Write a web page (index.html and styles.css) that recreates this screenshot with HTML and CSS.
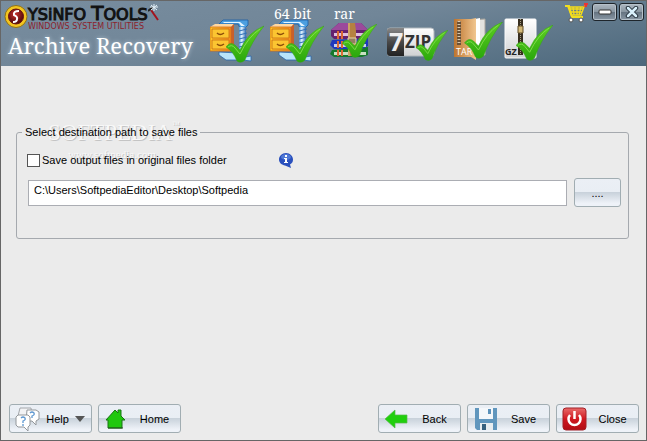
FILE: index.html
```html
<!DOCTYPE html>
<html lang="en">
<head>
  <meta charset="UTF-8">
  <meta name="viewport" content="width=device-width, initial-scale=1.0">
  <title>Archive Recovery</title>
  <link rel="stylesheet" href="styles.css">
</head>
<body>

<svg class="defs" width="0" height="0" aria-hidden="true">
  <defs>
    <linearGradient id="green" x1="0" y1="0" x2="0" y2="1">
      <stop offset="0" stop-color="#5fcf22"/><stop offset="1" stop-color="#2aa80c"/>
    </linearGradient>
    <linearGradient id="gold" x1="0" y1="0" x2="1" y2="0">
      <stop offset="0" stop-color="#ffc928"/><stop offset="1" stop-color="#f58a1c"/>
    </linearGradient>
    <linearGradient id="steel" x1="0" y1="0" x2="1" y2="0">
      <stop offset="0" stop-color="#4d9be0"/><stop offset=".4" stop-color="#e8f6ff"/><stop offset="1" stop-color="#2c68b0"/>
    </linearGradient>
    <linearGradient id="paper" x1="0" y1="0" x2="0" y2="1">
      <stop offset="0" stop-color="#ffffff"/><stop offset="1" stop-color="#cfd1d3"/>
    </linearGradient>
    <linearGradient id="dark" x1="0" y1="0" x2="0" y2="1">
      <stop offset="0" stop-color="#888"/><stop offset=".5" stop-color="#484848"/><stop offset="1" stop-color="#222"/>
    </linearGradient>
    <linearGradient id="folder" x1="0" y1="0" x2="1" y2="0">
      <stop offset="0" stop-color="#bd752f"/><stop offset="1" stop-color="#f1c68f"/>
    </linearGradient>
    <linearGradient id="redbox" x1="0" y1="0" x2="0" y2="1">
      <stop offset="0" stop-color="#e86a6a"/><stop offset=".5" stop-color="#d01820"/><stop offset="1" stop-color="#b00c14"/>
    </linearGradient>
    <radialGradient id="ball" cx=".45" cy=".35" r=".65">
      <stop offset="0" stop-color="#c8322e"/><stop offset="1" stop-color="#4a0808"/>
    </radialGradient>
    <symbol id="tick" viewBox="0 0 38 38">
      <path d="M0 21Q4 15 9 19L14 24Q22 6 38 0Q25 16 19 34Q15 38 11 35Q7 25 0 21Z" fill="url(#green)" stroke="#35a514" stroke-width=".5"/>
      <path d="M2 21Q6 18 9 22L14 28Q22 11 34 3" fill="none" stroke="#7fdc4c" stroke-width="1"/>
    </symbol>
    <symbol id="cabinet" viewBox="0 0 54 46">
      <path d="M9 5L13 1H38V6L35 9H30L28 5Z" fill="#4c9fe0" stroke="#1c5da4" stroke-width=".8"/>
      <path d="M14 3H30L35 7H31L29 4H13Z" fill="#e4f5ff"/>
      <path d="M9 33V36L16 41H32L41 42V37L35 38 28 34Z" fill="#b9e4fb" stroke="#2a66ac" stroke-width=".8"/>
      <path d="M29 8H36V38H29Z" fill="url(#steel)"/>
      <path d="M29 12L37 10M29 16L37 14M29 20L37 18M29 24L37 22M29 28L37 26M29 32L37 30M29 36L37 34" stroke="#2f70b8" stroke-width="1"/>
      <path d="M0 8L5 5H24L21 8Z" fill="#ffd7a0"/>
      <path d="M21 8L24 5V29L21 32Z" fill="#c9602a"/>
      <path d="M0 8H21V32H0Z" fill="url(#gold)" stroke="#cf6d1a" stroke-width=".8"/>
      <path d="M2 10H19V19H2ZM2 21H19V30H2Z" fill="#fbc531" stroke="#c76c16" stroke-width=".8"/>
      <path d="M7 14Q10 17 14 14M7 25Q10 28 14 25" fill="none" stroke="#8c4d0a" stroke-width="1.5"/>
      <use href="#tick" x="16" y="6" width="38" height="40"/>
    </symbol>
  </defs>
</svg>

<div class="window">
  <header class="titlebar">
    <div class="brand">
      <div class="logo">
        <svg class="logo-ball" width="24" height="25" viewBox="0 0 24 25">
          <circle cx="12" cy="12.500" r="11" fill="#f4c520" stroke="#8d7218" stroke-width="1"/>
          <circle cx="12" cy="12.500" r="7.500" fill="url(#ball)" stroke="#611" stroke-width="1"/>
          <path d="M15 7Q9 7 10 11Q14 13 13 15Q13 18 9 18" fill="none" stroke="#fff" stroke-width="2"/>
        </svg>
        <div class="logo-text">
          <div class="logo-name">YSiNFO <span class="logo-big">T</span>OOLS</div>
          <div class="logo-tag">WINDOWS SYSTEM UTILITIES</div>
        </div>
        <svg class="hammer" width="12" height="18" viewBox="0 0 12 18">
          <path d="M3 6L10 16" stroke="#a3121c" stroke-width="2"/>
          <path d="M0 7L5 3" stroke="#222" stroke-width="2"/>
          <path d="M6 0V7M2 3H10M3 1L9 6M9 1L3 6" stroke="#e4f0f8" stroke-width="1"/>
        </svg>
      </div>
      <h1>Archive Recovery</h1>
    </div>

    <div class="formats">
      <div class="format">
        <svg width="54" height="46"><use href="#cabinet"/></svg>
      </div>
      <div class="format">
        <span class="caption">64 bit</span>
        <svg width="54" height="46"><use href="#cabinet"/></svg>
      </div>
      <div class="format">
        <span class="caption">rar</span>
        <svg width="47" height="46" viewBox="0 0 47 46">
          <path d="M2 31L38 28V36L32 38H4L0 35Z" fill="#15792b"/>
          <path d="M4 33H36V36H4Z" fill="#c9dfc2"/>
          <path d="M2 21L38 19V27L32 30H4L0 26Z" fill="#2038bd"/>
          <path d="M4 25H36V28H4Z" fill="#c8d1ec"/>
          <path d="M1 11L9 4H31L38 11V18L32 20H4L1 17Z" fill="#65206f"/>
          <path d="M1 11L9 4H31L38 11Z" fill="#9b4a9c"/>
          <path d="M4 14H36V17H4Z" fill="#dfbfdf"/>
          <path d="M8 12V20M8 22V29M8 31V37M12 12V20M12 22V29M12 31V37" stroke="#dc6a34" stroke-width="2"/>
          <path d="M18 4H25L26 12V37H18Z" fill="#b58141"/>
          <path d="M19 4V37" stroke="#e6c28b"/>
          <path d="M18 19H26V25H18Z" fill="#947f60" stroke="#e9d5a9"/>
          <use href="#tick" x="12" y="5" width="35" height="35"/>
        </svg>
      </div>
      <div class="format seven">
        <svg width="61" height="46" viewBox="0 0 61 46">
          <rect x="0" y="9" width="47" height="28" rx="3" fill="url(#paper)" stroke="#aeb6bb"/>
          <path d="M3 9H17V37H3Q0 37 0 34V12Q0 9 3 9Z" fill="url(#dark)"/>
          <text class="seven-digit" x="2" y="32">7</text>
          <text class="seven-zip" x="18" y="29">ZIP</text>
          <use href="#tick" x="29" y="11" width="32" height="32"/>
        </svg>
      </div>
      <div class="format tar">
        <svg width="50" height="46" viewBox="0 0 50 46">
          <path d="M17 2L32 1V37L17 38Z" fill="#e3e2df" stroke="#aaa69e"/>
          <path d="M22 1L27 0V37L22 38Z" fill="#fff"/>
          <path d="M1 1H18L23 0V42L18 39H1Z" fill="url(#folder)"/>
          <path d="M6 3V27" stroke="#6b5136" stroke-width="4"/>
          <path d="M6 3V27" stroke="#dac9af" stroke-width="3" stroke-dasharray="1 2"/>
          <text class="tar-text" x="3" y="37">TAR</text>
          <use href="#tick" x="11" y="4" width="39" height="38"/>
        </svg>
      </div>
      <div class="format gz">
        <svg width="49" height="46" viewBox="0 0 49 46">
          <rect x="1" y="1" width="31" height="39" rx="1" fill="url(#paper)" stroke="#fafafa"/>
          <path d="M14 1H19V37H14Z" fill="#372e20"/>
          <path d="M16.500 1V37" stroke="#aaa285" stroke-dasharray="1 1"/>
          <path d="M14 8H19V15H14Z" fill="#d3b979" stroke="#5e4b24"/>
          <text class="gz-text" x="1" y="37">GZ</text>
          <use href="#tick" x="12" y="7" width="37" height="37"/>
        </svg>
      </div>
    </div>

    <div class="controls">
      <a class="cart" href="#" aria-label="Buy">
        <svg width="24" height="20" viewBox="0 0 24 20">
          <path d="M1 3H5L8 14H19" fill="none" stroke="#f0df20" stroke-width="2"/>
          <path d="M4 4H20L17 12H7ZM5 6H19M6 9H18M9 4L10 12M13 4V12M17 4L15 12" fill="none" stroke="#f4dc1c" stroke-width="1.300"/>
          <path d="M20 4L22 1" stroke="#e7771a" stroke-width="2"/>
          <path d="M20 1H24M22 0V4" stroke="#eb3434" stroke-width="2"/>
          <circle cx="7" cy="17" r="2" fill="#fff" stroke="#555"/><circle cx="17" cy="17" r="2" fill="#fff" stroke="#555"/>
        </svg>
      </a>
      <button class="win-btn" aria-label="Minimize">
        <svg width="14" height="12" viewBox="0 0 14 12"><rect x="1" y="4" width="12" height="4" rx="1" fill="#fff" stroke="#333"/></svg>
      </button>
      <button class="win-btn" aria-label="Close window">
        <svg width="14" height="12" viewBox="0 0 14 12">
          <path d="M3 2L11 10M11 2L3 10" stroke="#26323c" stroke-width="4.500" stroke-linecap="round"/>
          <path d="M3 2L11 10M11 2L3 10" stroke="#d9f0fb" stroke-width="2.500" stroke-linecap="round"/>
        </svg>
      </button>
    </div>
  </header>

  <main>
    <div class="watermark" aria-hidden="true">
      <div class="mark-name">SOFTPEDIA<sup>™</sup></div>
      <div class="mark-url">www.softpedia.com</div>
    </div>
    <fieldset>
      <legend>Select destination path to save files</legend>
      <div class="option">
        <input type="checkbox" id="original">
        <label for="original">Save output files in original files folder</label>
        <svg class="info" width="15" height="15" viewBox="0 0 15 15">
          <path d="M7 0C3 0 0 3 0 6.500S3 12 6 12.500L12 15L11 11.500C13 10 14 9 14 6.500C14 3 11 0 7 0Z" fill="#2a50bd"/>
          <ellipse cx="7" cy="4" rx="5" ry="3" fill="#5079d6"/>
          <path d="M6 2H8V4H6ZM5 5H8V9H9V10H5V9H6V6H5Z" fill="#fff"/>
        </svg>
      </div>
      <div class="path-row">
        <input type="text" aria-label="Destination path" value="C:\Users\SoftpediaEditor\Desktop\Softpedia">
        <button class="btn browse">....</button>
      </div>
    </fieldset>
  </main>

  <footer>
    <button class="btn help">
      <svg width="26" height="26" viewBox="0 0 26 26">
        <path d="M6 2H17L18 10H9L8 13 7 10H4Z" fill="#f2f3f5" stroke="#a3a6aa"/>
        <path d="M13 4H22L25 6V13L22 15 22 19 18 15H12Z" fill="#fff" stroke="#93979b"/>
        <path d="M4 9H14L16 11V19L14 21V25L10 21H4L2 19V11Z" fill="#fff" stroke="#93979b"/>
        <path d="M7 12Q9 10 11 12Q12 14 9 15V17M9 18V20M16 7Q18 5 20 7Q21 9 18 10V12" fill="none" stroke="#5d97d0" stroke-width="1.300"/>
      </svg>
      <span>Help</span>
      <svg class="arrow" width="10" height="6" viewBox="0 0 10 6"><path d="M0 0H10L5 6Z" fill="#555"/></svg>
    </button>
    <button class="btn">
      <svg width="26" height="26" viewBox="0 0 26 26">
        <path d="M3 14L12 4L15 7V4H18V10L22 14H19V22H5V14Z" fill="#20c80e" stroke="#187414"/>
        <path d="M5 22H20" stroke="#244e20" stroke-width="1"/>
      </svg>
      <span>Home</span>
    </button>
    <div class="spacer"></div>
    <button class="btn">
      <svg width="26" height="26" viewBox="0 0 26 26">
        <path d="M2 13L12 4V9H24V17H12V22Z" fill="#20cf0d" stroke="#58b94b" stroke-width=".7"/>
      </svg>
      <span>Back</span>
    </button>
    <button class="btn">
      <svg width="26" height="26" viewBox="0 0 26 26">
        <path d="M3 2H25V24H5L3 22Z" fill="#6096bd"/>
        <path d="M7 2H21V13H7Z" fill="#f4f7fa"/>
        <path d="M16 3H19V8H16Z" fill="#5b91b9"/>
        <path d="M8 17H21V24H8Z" fill="#e8edf0"/>
        <path d="M10 18H14V24H10Z" fill="#37617e"/>
      </svg>
      <span>Save</span>
    </button>
    <button class="btn">
      <svg width="26" height="26" viewBox="0 0 26 26">
        <rect x="2" y="2" width="23" height="22" rx="3" fill="url(#redbox)" stroke="#a32026"/>
        <path d="M9 9A6 6 0 1 0 18 9" fill="none" stroke="#fff" stroke-width="2.500"/>
        <path d="M13.500 5V13" stroke="#fff" stroke-width="2.500"/>
      </svg>
      <span>Close</span>
    </button>
  </footer>
</div>

</body>
</html>
```

FILE: styles.css
```css
* {
  box-sizing: border-box;
}

body {
  margin: 0;
  font-family: "Liberation Sans", Arial, sans-serif;
  font-size: 11px;
  color: #000;
}

svg {
  display: block;
  flex: none;
}

.defs {
  position: absolute;
}

.window {
  display: flex;
  flex-direction: column;
  min-height: 100vh;
  border: 1px solid #666;
  background: #ebebeb;
}

/* title bar */
.titlebar {
  display: flex;
  height: 65px;
  background: linear-gradient(170deg, #788d9f 0%, #718698 45%, #4c687c 100%);
}

.brand {
  width: 209px;
  flex: none;
  padding: 3px 0 0 3px;
}

.logo {
  display: flex;
  height: 25px;
}

.logo-text {
  white-space: nowrap;
}

.logo-name {
  font-family: "DejaVu Sans", sans-serif;
  font-size: 16px;
  line-height: 18px;
  color: #111;
  -webkit-text-stroke: 1px #111;
}

.logo-big {
  font-size: 20px;
  line-height: 18px;
}

.logo-tag {
  font-family: "DejaVu Sans", sans-serif;
  font-size: 8px;
  line-height: 6px;
  color: #8c1f2b;
}

h1 {
  margin: 0 0 0 4px;
  font-family: "Noto Serif", "DejaVu Serif Condensed", "DejaVu Serif", serif;
  font-size: 22px;
  line-height: 32px;
  font-weight: normal;
  color: #fff;
  white-space: nowrap;
  text-shadow: 0 0 4px #b8cbd9;
}

.formats {
  display: flex;
  flex: none;
  gap: 6px;
  padding-top: 18px;
}

.format {
  position: relative;
}

.seven {
  margin-left: 4px;
}

.tar {
  margin-left: -1px;
}

.gz {
  margin-left: -5px;
}

.gz svg,
.tar svg {
  margin-top: -1px;
}

.caption {
  position: absolute;
  left: 4px;
  top: -13px;
  font-family: "Noto Serif", "DejaVu Serif Condensed", "DejaVu Serif", serif;
  font-size: 14px;
  line-height: 16px;
  color: #fff;
  white-space: nowrap;
}

.seven-digit {
  font: bold 25px "Open Sans", sans-serif;
  fill: #eee;
}

.seven-zip {
  font: bold 17px "Open Sans", sans-serif;
  fill: #333;
}

.tar-text {
  font: 9px "Open Sans", sans-serif;
  fill: #fff;
}

.gz-text {
  font: bold 9px "Open Sans", sans-serif;
  fill: #222;
}

.controls {
  display: flex;
  align-items: flex-start;
  gap: 2px;
  margin-left: auto;
  padding: 2px 2px 0 0;
}

.cart {
  margin-right: 2px;
}

.win-btn {
  display: flex;
  align-items: center;
  justify-content: center;
  width: 25px;
  height: 18px;
  padding: 0;
  border: 1px solid #1e252b;
  border-radius: 3px;
  background: linear-gradient(#aeb8c1, #8996a1 48%, #64727f 50%, #8a98a5);
  box-shadow: inset 0 0 0 1px #b5c0c9;
}

/* destination */
main {
  position: relative;
  flex: 1;
  padding: 60px 17px 0 15px;
}

.watermark {
  position: absolute;
  left: 47px;
  top: 55px;
  color: #f8f8f8;
  font-family: "Liberation Serif", serif;
  text-shadow: 1px 1px 0 #c4c4c4;
  pointer-events: none;
}

.mark-name {
  font-size: 23px;
  line-height: 24px;
}

.mark-name sup {
  font-size: 8px;
  line-height: 8px;
  vertical-align: top;
}

.mark-url {
  padding-left: 20px;
  font-size: 11px;
  line-height: 18px;
}

fieldset {
  position: relative;
  height: 113px;
  margin: 0;
  padding: 11px 7px 0 10px;
  border: 1px solid #a5a9ae;
  border-radius: 3px;
}

legend {
  margin-left: -5px;
  padding: 0 3px;
  line-height: 13px;
}

.option {
  display: flex;
  align-items: center;
  height: 20px;
}

.option input {
  appearance: none;
  width: 13px;
  height: 13px;
  margin: 0 2px 0 0;
  border: 1px solid #555;
  background: #fff;
}

.option input:checked {
  background: #4a7fb5;
}

.option label {
  width: 237px;
}

.path-row {
  display: flex;
  align-items: center;
  gap: 7px;
  margin-top: 8px;
}

.path-row input {
  flex: 1;
  min-width: 0;
  height: 26px;
  margin-left: 1px;
  padding: 0 5px 5px;
  border: 1px solid #abadb3;
  background: #fff;
  font: inherit;
  color: #000;
}

.btn {
  display: flex;
  align-items: center;
  width: 83px;
  height: 29px;
  padding: 0 0 0 4px;
  border: 1px solid #a1adb2;
  border-radius: 3px;
  background: linear-gradient(#ebeff5 0%, #e9eef4 48%, #c9d2db 50%, #eef2f8 90%);
  font: inherit;
  color: #000;
}

.btn span {
  flex: 1;
  text-align: center;
}

.help {
  padding-right: 6px;
}

.browse {
  width: 47px;
  justify-content: center;
  padding: 0;
}

/* bottom buttons */
footer {
  display: flex;
  gap: 6px;
  padding: 0 7px 7px 8px;
}

.spacer {
  flex: 1;
}
```
